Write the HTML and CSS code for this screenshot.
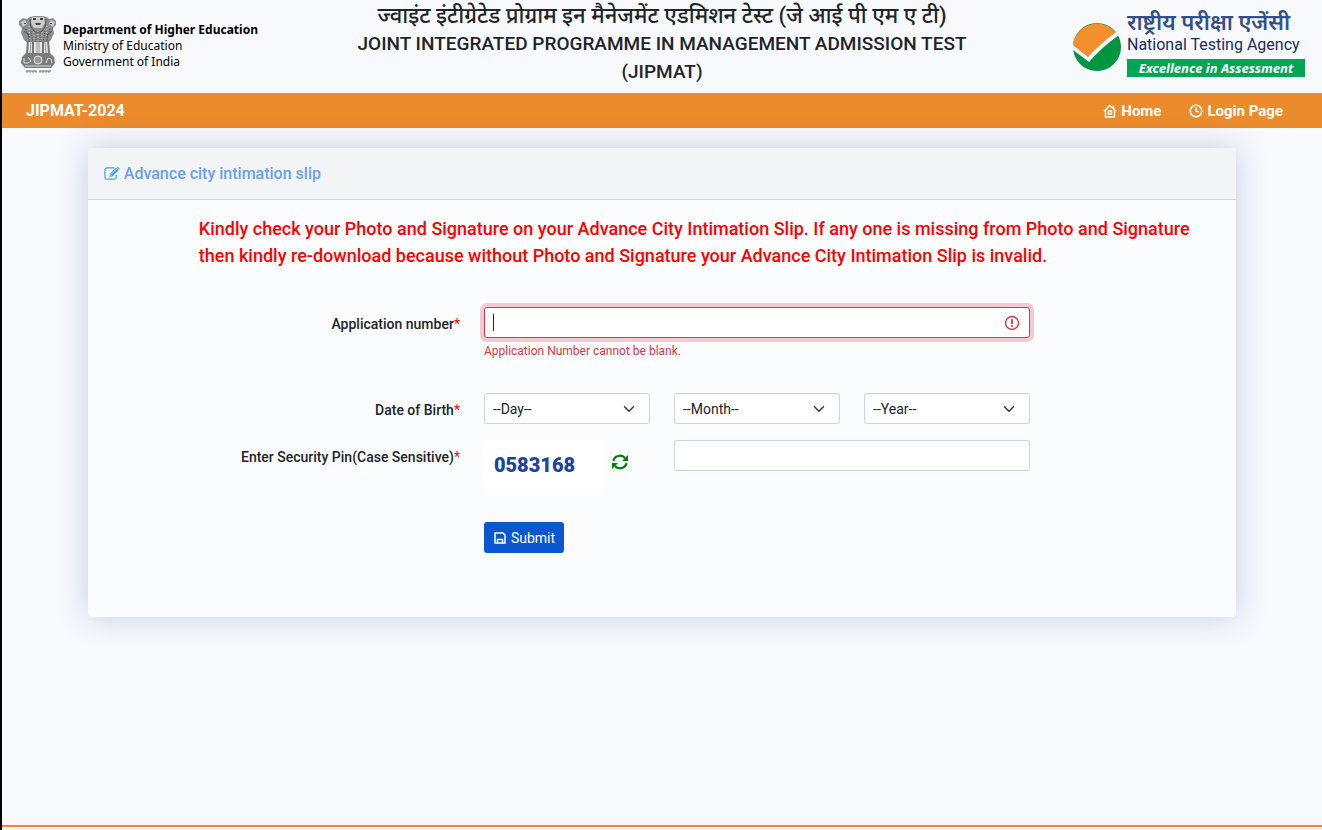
FILE: index.html
```
<!DOCTYPE html>
<html lang="en">
<head>
  <meta charset="utf-8">
  <meta name="viewport" content="width=device-width, initial-scale=1">
  <title>JIPMAT-2024</title>
  <link rel="stylesheet" href="styles.css">
</head>
<body>
  <header class="header">
    <div class="ministry">
      <svg class="emblem" viewBox="0 0 38 60" role="img" aria-label="Emblem of India">
        <path fill="#8c8c8c" d="M11 2l4-1h9l4 1 2 2 4-1 3 3v4l-3 3 1 5-3 7-5 4H10l-5-4-3-7 1-5-3-3V6l4-3 4 1z"/>
        <path fill="#ccc" d="M13 2h12l1 6-3 5h-8l-3-5zM2 7l4-2 2 4-4 3zM36 7l-4-2-2 4 4 3z"/>
        <path fill="#444" d="M14 3h3v2h-3zM21 3h3v2h-3zM16 8h6l-1 2h-4zM5 8h2v1H5zM31 8h2v1h-2z"/>
        <path fill="none" stroke="#555" d="M11 4l1 8 4 5h6l4-5 1-8M5 16l5 4v7M33 16l-5 4v7"/>
        <path fill="none" stroke="#555" stroke-dasharray="1 1" d="M12 16l2 11M26 16l-2 11M7 14l3 9M31 14l-3 9M17 18v9M21 18v9M4 13l4 2M34 13l-4 2"/>
        <path fill="none" stroke="#c4c4c4" stroke-dasharray="1 2" d="M10 11l1 13M28 11l-1 13M15 17v9M19 16v11M23 17v9"/>
        <path fill="#e4e4e4" d="M9 27h20l1 12H8z"/>
        <path fill="none" stroke="#777" stroke-width="2" d="M9 25L8 38M14 26v12M24 26v12M29 25l1 13"/>
        <path fill="none" stroke="#999" d="M12 27l-1 11M18 27v11M20 27v11M26 27l1 11"/>
        <path fill="#7c7c7c" d="M7 38h24l4 4 1 6-4 5H6l-4-5 1-6z"/>
        <circle cx="19" cy="45" r="4" fill="#999" stroke="#e4e4e4"/>
        <path fill="none" stroke="#ddd" d="M5 43v5h4M9 42l3 4-3 2M27 48l2-5 3 1 1 4M6 51h26"/>
        <path fill="none" stroke="#666" d="M7 56h11M20 56h12"/>
        <path fill="none" stroke="#888" stroke-dasharray="2 1" d="M7 57h11M20 57h12"/>
      </svg>
      <p><b>Department of Higher Education</b><br>Ministry of Education<br>Government of India</p>
    </div>

    <h1 class="title">
      <span lang="hi">ज्वाइंट इंटीग्रेटेड प्रोग्राम इन मैनेजमेंट एडमिशन टेस्ट (जे आई पी एम ए टी)</span>
      JOINT INTEGRATED PROGRAMME IN MANAGEMENT ADMISSION TEST (JIPMAT)
    </h1>

    <div class="agency">
      <svg class="agency-mark" viewBox="0 0 48 48" aria-hidden="true">
        <circle cx="24" cy="24" r="24" fill="#00963f"/>
        <path fill="#f4902c" d="M0 24A24 24 0 0 1 43 10Q28 20 15 34L0 22z"/>
        <path fill="#f8f9fd" d="M0 22L15 34Q28 20 43 9L46 12Q29 24 16 39L0 27z"/>
      </svg>
      <div class="agency-text">
        <span class="agency-hindi" lang="hi">राष्ट्रीय परीक्षा एजेंसी</span>
        <span class="agency-name">National Testing Agency</span>
        <span class="agency-motto">Excellence in Assessment</span>
      </div>
    </div>
  </header>

  <nav class="navbar">
    <span class="brand">JIPMAT-2024</span>
    <div class="nav-links">
      <a href="#">
        <svg width="14" height="14" viewBox="0 0 14 14" fill="none" stroke="currentColor" stroke-width="1.4"><path d="M1 7l6-5.500 6 5.500M2.500 6v7h9V6M10.500 4V1.500"/><path d="M5.500 7h3v3h-3z"/></svg>
        Home
      </a>
      <a href="#">
        <svg width="14" height="14" viewBox="0 0 14 14" fill="none" stroke="currentColor" stroke-width="1.500"><circle cx="7" cy="7" r="5.800"/><path d="M7 3.500v4h3"/></svg>
        Login Page
      </a>
    </div>
  </nav>

  <main class="card">
    <h2 class="card-header">
      <svg width="16" height="15" viewBox="0 0 17 15" fill="none" stroke="currentColor"><path stroke-width="1.300" d="M11 1.500H3A2 2 0 0 0 1 3.500v8a2 2 0 0 0 2 2h8a2 2 0 0 0 2-2V9"/><path fill="currentColor" stroke="none" d="M12.800 1.200l3 2.700-6.600 6.500-3.400.800.500-3.500zM13.500.500l.800-.500L17 2.300l-.700.900z"/><path stroke="#f3f4f6" stroke-width=".8" d="M8 8l5-5M6.500 8.500l1.500 1.500"/></svg>
      Advance city intimation slip
    </h2>
    <form class="form" action="#" method="post">
      <p class="notice">Kindly check your Photo and Signature on your Advance City Intimation Slip. If any one is missing from Photo and Signature then kindly re-download because without Photo and Signature your Advance City Intimation Slip is invalid.</p>

      <label class="label" for="appno">Application number<em>*</em></label>
      <div class="field wide app-number">
        <div class="input-wrap">
          <input class="control invalid" type="text" id="appno" aria-describedby="appno-error">
          <span class="caret"></span>
          <svg class="error-icon" width="16" height="16" viewBox="0 0 16 16" fill="none" stroke="#dc3545" stroke-width="1.400" aria-hidden="true"><circle cx="8" cy="8" r="6.500"/><path stroke-width="1.800" d="M8 4v5M8 10.200v1.800"/></svg>
        </div>
        <div class="error" id="appno-error">Application Number cannot be blank.</div>
      </div>

      <label class="label" for="day">Date of Birth<em>*</em></label>
      <select class="control field" id="day"><option>--Day--</option></select>
      <select class="control field" id="month" aria-label="Month"><option>--Month--</option></select>
      <select class="control field" id="year" aria-label="Year"><option>--Year--</option></select>

      <label class="label" for="pin">Enter Security Pin(Case Sensitive)<em>*</em></label>
      <div class="captcha field">
        <span class="captcha-code">0583168</span>
        <button class="refresh" type="button" aria-label="Refresh security pin">
          <svg width="16" height="16" viewBox="0 0 16 16" fill="none" stroke="currentColor" stroke-width="2.200"><path d="M1.500 7A6.500 6 0 0 1 13 4M14.500 9A6.500 6 0 0 1 3 12"/><path fill="currentColor" stroke="none" d="M16 1v6h-6zM0 15V9h6z"/></svg>
        </button>
      </div>
      <input class="control pin" type="text" id="pin">

      <button class="submit" type="submit">
        <svg width="12" height="12" viewBox="0 0 12 12" fill="none" stroke="currentColor" stroke-width="1.500"><path d="M1 1h8l2 2v8H1z"/><path d="M3.500 11V7.500h5V11"/></svg>
        Submit
      </button>
    </form>
  </main>

  <footer class="footer"></footer>
</body>
</html>
```
FILE: styles.css
```
* {
  box-sizing: border-box;
}

body {
  display: flex;
  flex-direction: column;
  min-height: 100vh;
  margin: 0;
  border-left: 2px solid #000;
  background-color: #f8f9fd;
  color: #212529;
  font-family: Roboto, "Noto Sans", sans-serif;
  font-size: 14px;
}

.header {
  display: grid;
  grid-template-columns: 1fr 2fr 1fr;
  min-height: 93px;
}

.ministry {
  display: flex;
  align-items: flex-start;
  gap: 6px;
  padding: 15px 0 0 17px;
  color: #000;
  font-family: "Noto Sans", sans-serif;
  font-size: 12px;
  line-height: 16px;
  white-space: nowrap;
}

.ministry p {
  margin: 7px 0 0;
}

.emblem {
  width: 38px;
  height: 60px;
}

.title {
  margin: 0;
  padding: 2px 12px 0;
  font-size: 19px;
  font-weight: 500;
  line-height: 28px;
  text-align: center;
}

.title span {
  display: block;
  font-size: 22px;
  white-space: nowrap;
}

.agency {
  display: flex;
  justify-content: flex-end;
  gap: 6px;
  padding: 12px 17px 0 0;
  white-space: nowrap;
}

.agency-mark {
  width: 48px;
  height: 48px;
  margin-top: 11px;
}

.agency-text {
  display: flex;
  flex-direction: column;
  width: 178px;
}

.agency-hindi {
  color: #34508c;
  font-size: 22px;
  font-weight: 600;
  line-height: 22px;
}

.agency-name {
  color: #1c2c5c;
  font-size: 16px;
  line-height: 22px;
}

.agency-motto {
  margin-top: 3px;
  background-color: #00a651;
  color: #fff;
  font-family: "Noto Sans", sans-serif;
  font-size: 13px;
  font-style: italic;
  font-weight: 700;
  line-height: 18px;
  text-align: center;
}

.navbar {
  display: flex;
  align-items: center;
  justify-content: space-between;
  height: 35px;
  padding: 0 39px 0 24px;
  background-color: #eb8b2b;
  color: #fff;
  font-size: 16px;
  font-weight: 700;
}

.nav-links {
  display: flex;
  gap: 28px;
  font-size: 15px;
}

.nav-links a {
  display: flex;
  align-items: center;
  gap: 4px;
  color: #fff;
  text-decoration: none;
}

.card {
  width: 87%;
  margin: 20px auto;
  border-radius: 4px;
  background-color: #fbfcfe;
  box-shadow: 0 0 30px rgba(40, 80, 160, .25);
}

.card-header {
  display: flex;
  align-items: center;
  gap: 4px;
  height: 52px;
  margin: 0;
  padding: 0 16px;
  border-bottom: 1px solid #d3d5d9;
  border-radius: 4px 4px 0 0;
  background-color: #f3f4f6;
  color: #6a9ff0;
  font-size: 16px;
  font-weight: 500;
}

.card-header svg {
  color: #4a9fe8;
}

.form {
  display: grid;
  grid-template-columns: repeat(12, 1fr);
  column-gap: 24px;
  row-gap: 16px;
  align-items: start;
  padding: 15px 16px 64px;
}

.notice {
  grid-column: 2 / -1;
  margin: 0 0 22px;
  color: #f00;
  font-size: 18px;
  font-weight: 500;
  line-height: 27px;
}

.label {
  grid-column: span 4;
  padding-top: 7px;
  font-weight: 500;
  line-height: 21px;
  text-align: right;
}

.label em {
  color: #f00;
  font-style: normal;
  font-weight: 400;
}

.field {
  grid-column: span 2;
}

.wide {
  grid-column: span 6;
}

.app-number {
  margin-bottom: 17px;
}

.control {
  width: 100%;
  height: 31px;
  padding: 4px 8px;
  border: 1px solid #ced4da;
  border-radius: 3px;
  background-color: #fff;
  color: #212529;
  font: inherit;
}

select.control {
  appearance: none;
  background-image: url("data:image/svg+xml,%3Csvg xmlns='http://www.w3.org/2000/svg' viewBox='0 0 16 16'%3E%3Cpath fill='none' stroke='%23343a40' stroke-width='2' stroke-linecap='round' stroke-linejoin='round' d='M2 5l6 6 6-6'/%3E%3C/svg%3E");
  background-position: right 14px center;
  background-repeat: no-repeat;
  background-size: 12px 12px;
}

/* day, month and year start a row after the label */
.label + select {
  grid-column: 5 / span 2;
}

.input-wrap {
  position: relative;
}

.control.invalid {
  border-color: #dc3545;
  outline: none;
  box-shadow: 0 0 0 4px rgba(220, 53, 69, .25);
}

.caret {
  position: absolute;
  top: 7px;
  left: 9px;
  width: 1px;
  height: 17px;
  background-color: #212529;
  pointer-events: none;
}

/* the real caret takes over once the box has focus */
.invalid:focus + .caret {
  display: none;
}

.error-icon {
  position: absolute;
  top: 8px;
  right: 10px;
}

.error {
  margin-top: 4px;
  color: #dc3545;
  font-size: 12px;
  line-height: 18px;
}

#year {
  grid-column: 9 / span 2;
}

.label[for="day"],
.label[for="pin"] {
  grid-column: 1 / span 4;
}

.captcha {
  display: flex;
  align-items: center;
  gap: 8px;
}

.captcha-code {
  width: 120px;
  padding-left: 10px;
  background-color: #fff;
  color: #2043a0;
  font-size: 20px;
  font-weight: 900;
  line-height: 50px;
}

.refresh {
  padding: 0 0 6px;
  border: 0;
  background: none;
  color: #008000;
  line-height: 0;
}

.pin {
  grid-column: span 4;
}

.submit {
  grid-column: 5 / span 8;
  justify-self: start;
  display: flex;
  align-items: center;
  gap: 5px;
  height: 31px;
  margin-top: 16px;
  padding: 0 9px 0 10px;
  border: 0;
  border-radius: 3px;
  background-color: #0b57d0;
  color: #fff;
  font: inherit;
}

.footer {
  height: 5px;
  margin-top: auto;
  border-top: 2px solid #eb8b2b;
}
```
